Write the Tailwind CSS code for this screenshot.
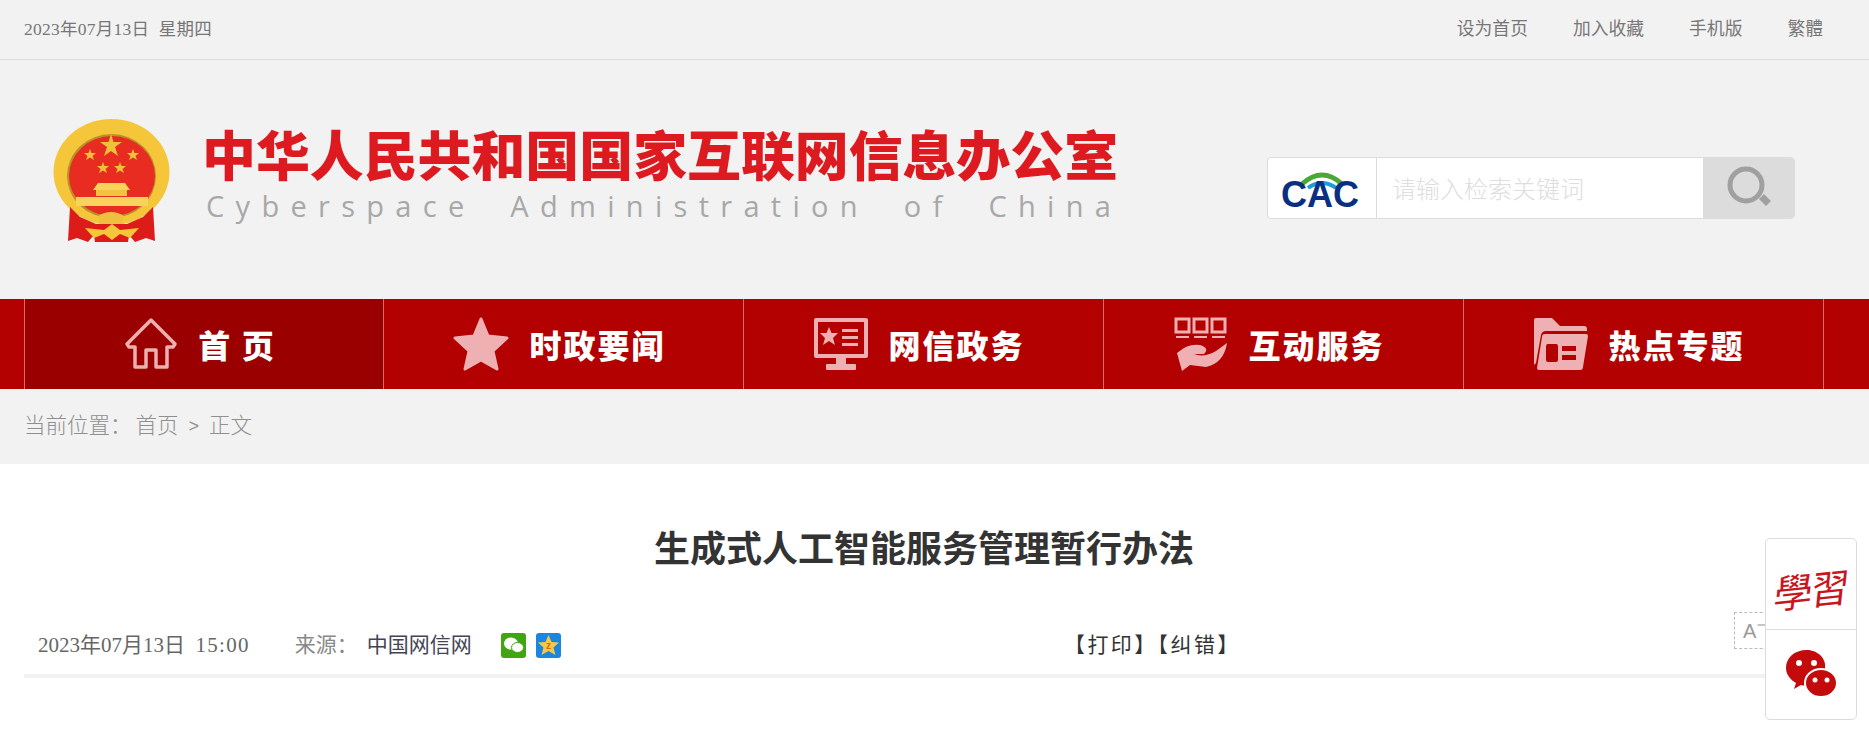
<!DOCTYPE html>
<html lang="zh">
<head>
<meta charset="utf-8">
<title>生成式人工智能服务管理暂行办法</title>
<script src="https://cdn.jsdelivr.net/npm/@tailwindcss/browser@4"></script>
</head>
<body class="relative h-[739px] w-[1869px] overflow-hidden bg-white font-['Liberation_Serif','Noto_Sans_CJK_SC',serif]">

<div class="flex h-[60px] items-center justify-between border-b border-[#dcdcdc] bg-[#f2f2f2] pl-6 pr-[46px] text-[17.5px] text-[#777]">
  <div class="whitespace-pre tracking-[0.26px]">2023年07月13日  星期四</div>
  <div class="flex gap-[45px] text-[17.8px]">
    <a>设为首页</a><a>加入收藏</a><a>手机版</a><a>繁體</a>
  </div>
</div>

<header class="flex h-[239px] items-center bg-[#f2f2f2] pl-[53px]">
  <svg class="mt-[2px] shrink-0" width="117" height="124" viewBox="23 19 117 124">
    <ellipse cx="81.5" cy="72" rx="58" ry="53" fill="#f6c63a"/>
    <ellipse cx="81.5" cy="76" rx="44.500" ry="42" fill="#b8912a"/>
    <ellipse cx="82" cy="76" rx="43" ry="40" fill="#e92c22"/>
    <path d="M81 34 L83.500 42 L92 42 L85 47 L88 56 L81 51 L74 56 L77 47 L70 42 L78.500 42 Z" fill="#f0c23a"/>
    <path d="M60 49 L61.500 53 L66 53 L62.500 56 L64 60 L60 57.500 L56 60 L57.500 56 L54 53 L58.500 53 Z" fill="#f0c23a"/>
    <path d="M103 49 L104.500 53 L109 53 L105.500 56 L107 60 L103 57.500 L99 60 L100.500 56 L97 53 L101.500 53 Z" fill="#f0c23a"/>
    <path d="M73 62 L74.500 66 L79 66 L75.500 69 L77 73 L73 70.500 L69 73 L70.500 69 L67 66 L71.500 66 Z" fill="#f0c23a"/>
    <path d="M90 62 L91.500 66 L96 66 L92.500 69 L94 73 L90 70.500 L86 73 L87.500 69 L84 66 L88.500 66 Z" fill="#f0c23a"/>
    <path d="M68 83 H95 L100 90 H63 Z" fill="#f8d35a"/>
    <rect x="66" y="90" width="31" height="6" fill="#f3c23e"/>
    <rect x="46" y="97" width="72" height="9" fill="#f8d35a"/>
    <path d="M40 107 L50 117 L66 124 L64 135 L58 142 L47 138 L38 141 Z" fill="#dd1c1a"/>
    <path d="M123 107 L113 117 L97 124 L99 135 L105 142 L116 138 L125 141 Z" fill="#dd1c1a"/>
    <path d="M62 124 H101 L98 142 H65 Z" fill="#dd1c1a"/>
    <path d="M68 116 Q81 108 94 116 L92 124 H70 Z" fill="#efc040"/>
    <path d="M55 128 L74 130 L82 124 L90 130 L109 128 L100 138 L90 134 L82 140 L74 134 L64 138 Z" fill="#f6c63a"/>
  </svg>
  <div class="mb-[15px] ml-[32px] w-[920px]">
    <div class="h-[66px] whitespace-nowrap font-['Noto_Sans_CJK_SC',sans-serif] text-[53.9px] leading-[66px] font-black text-[#dc1a1f]">中华人民共和国国家互联网信息办公室</div>
    <div class="ml-[4px] mt-[2px] whitespace-pre font-['Open_Sans',sans-serif] text-[29px] leading-[36px] tracking-[11.3px] text-[#a8a8a8] [word-spacing:16px]">Cyberspace Administration of China</div>
  </div>
  <div class="ml-[145px] mt-[16px] flex h-[62px] w-[528px] items-stretch overflow-hidden rounded-[4px] border border-[#dcdcdc] bg-white">
    <div class="relative w-[109px] border-r border-[#dcdcdc]">
      <svg class="absolute left-[32px] top-[14px]" width="44" height="14" viewBox="0 0 44 14">
        <path d="M2 12 Q22 -6 42 12" fill="none" stroke="#4ba838" stroke-width="5"/>
      </svg>
      <svg class="absolute left-[39px] top-[23px]" width="30" height="8" viewBox="0 0 30 8">
        <path d="M1 7 Q15 -3 29 7" fill="none" stroke="#1b9ddb" stroke-width="4"/>
      </svg>
      <span class="absolute left-[13px] top-[17px] font-['Liberation_Sans',sans-serif] text-[36px] leading-[40px] font-bold text-[#0b2f80]">CAC</span>
    </div>
    <div class="flex flex-1 items-center pl-[15px] font-['Noto_Sans_CJK_SC',sans-serif] text-[24px] font-light text-[#dedede]">请输入检索关键词</div>
    <div class="flex w-[91px] items-center justify-center bg-[#dcdcdc]">
      <svg width="46" height="46" viewBox="0 0 46 46">
        <ellipse cx="20" cy="20" rx="16" ry="16" fill="none" stroke="#a0a0a0" stroke-width="5"/>
        <path d="M33 34 L38 29 L45 36 L40 41 Z" fill="#a0a0a0"/>
      </svg>
    </div>
  </div>
</header>

<nav class="flex h-[90px] bg-[#b30000] pl-6 font-['Noto_Sans_CJK_SC',sans-serif] text-[32px] font-black text-white">
  <a class="flex w-[360px] items-center justify-center gap-5 border-x border-[#d96a6a] bg-[#9a0000] pr-2 tracking-[2px]">
    <svg width="54" height="54" viewBox="0 0 54 54" fill="none" stroke="#edb0b0" stroke-width="3.500" stroke-linejoin="round"><path d="M27 3 L3 27 L5 30 H11 V50 H22 V33 H32 V50 H43 V30 H49 L51 27 Z"/></svg>
    <span class="whitespace-pre">首 页</span>
  </a>
  <a class="flex w-[360px] items-center justify-center gap-5 border-r border-[#d96a6a] pr-2 tracking-[2px]">
    <svg width="56" height="56" viewBox="0 0 56 56" fill="#eeb0b2" stroke="#eeb0b2" stroke-width="3" stroke-linejoin="round"><path d="M28 3 L35 20 L54 22 L40 35 L44 53 L28 44 L12 53 L16 35 L2 22 L21 20 Z"/></svg>
    <span>时政要闻</span>
  </a>
  <a class="flex w-[360px] items-center justify-center gap-5 border-r border-[#d96a6a] pr-2 tracking-[2px]">
    <svg width="54" height="54" viewBox="0 0 54 54" fill="#eeb0b2">
      <path fill-rule="evenodd" d="M2 1 H52 Q54 1 54 3 V39 Q54 41 52 41 H2 Q0 41 0 39 V3 Q0 1 2 1 Z M4 5 V37 H50 V5 Z"/>
      <path d="M15 10 L17.500 16 L24 16 L19 21 L21 28 L15 24 L9 28 L11 21 L6 16 L12.500 16 Z"/>
      <rect x="28" y="12" width="16" height="3"/><rect x="28" y="19" width="16" height="3"/><rect x="28" y="26" width="16" height="3"/>
      <rect x="22" y="41" width="10" height="6"/><rect x="12" y="47" width="30" height="6" rx="1"/>
    </svg>
    <span>网信政务</span>
  </a>
  <a class="flex w-[360px] items-center justify-center gap-5 border-r border-[#d96a6a] pr-2 tracking-[2px]">
    <svg width="54" height="54" viewBox="0 0 54 54" fill="#eeb0b2">
      <g fill="none" stroke="#eeb0b2" stroke-width="3"><rect x="2" y="2" width="13" height="13"/><rect x="20" y="2" width="13" height="13"/><rect x="38" y="2" width="13" height="13"/></g>
      <path d="M2 19 H15 V21 H2 Z M20 19 H33 V21 H20 Z M38 19 H51 V21 H38 Z"/>
      <path d="M3 36 Q14 26 26 28 Q36 31 30 37 H20 Q30 41 42 34 L53 26 Q50 46 32 50 L16 48 L8 54 Z"/>
    </svg>
    <span>互动服务</span>
  </a>
  <a class="flex w-[360px] items-center justify-center gap-5 border-r border-[#d96a6a] pr-2 tracking-[2px]">
    <svg width="54" height="54" viewBox="0 0 54 54" fill="#eeb0b2">
      <path d="M0 3 Q0 1 2 1 H18 L26 9 H50 Q53 9 53 12 V14 H12 Q8 14 7 18 L2 46 L0 48 Z"/>
      <path fill-rule="evenodd" d="M11 17 H52 Q54 17 54 19 L49 50 Q49 53 46 53 H5 Q3 53 3 51 L8 20 Q8 17 11 17 Z M14 27 Q12 27 12 29 V43 Q12 45 14 45 H22 Q24 45 24 43 V29 Q24 27 22 27 Z M28 29 V34 H42 V29 Z M28 38 V43 H42 V38 Z"/>
    </svg>
    <span>热点专题</span>
  </a>
</nav>

<div class="flex h-[75px] items-center whitespace-pre bg-[#f2f2f2] pl-6 font-['Liberation_Sans','Noto_Sans_CJK_SC',sans-serif] text-[21.5px] font-light text-[#8f8f8f]">当前位置：<span class="ml-[4px]">首页</span><span class="mx-[10px] text-[18px]">&gt;</span><span>正文</span></div>

<main class="ml-6 w-[1821px]">
  <h1 class="mt-[58px] w-[1800px] text-center font-['Noto_Sans_CJK_SC',sans-serif] text-[36px] leading-[48px] font-bold text-[#333]">生成式人工智能服务管理暂行办法</h1>
  <div class="relative mt-[58px] flex h-[50px] items-center border-b-4 border-[#f2f2f2] pb-[11px] pl-[14px] text-[21px]">
    <span class="whitespace-pre text-[#666]">2023年07月13日  <span class="tracking-[1.3px]">15:00</span></span>
    <span class="ml-[45px] text-[#888]">来源：</span>
    <span class="ml-[9px] text-[#445]">中国网信网</span>
    <svg class="ml-[29px]" width="25" height="25" viewBox="0 0 25 25">
      <rect width="25" height="25" rx="3" fill="#3fa511"/>
      <ellipse cx="10" cy="10.500" rx="7" ry="6" fill="#fff"/>
      <ellipse cx="16.500" cy="14.500" rx="6" ry="5" fill="#fff" stroke="#3fa511"/>
    </svg>
    <svg class="ml-[10px]" width="25" height="25" viewBox="0 0 25 25">
      <rect width="25" height="25" rx="3" fill="#1a86e0"/>
      <path d="M12.500 2 L15.500 9 L23 9.500 L17.500 14.500 L19.500 22 L12.500 18 L5.500 22 L7.500 14.500 L2 9.500 L9.500 9 Z" fill="#f6c945"/>
      <text x="12.500" y="16" text-anchor="middle" font-size="10" font-weight="700" fill="#d8641e" font-family="Liberation Sans">z</text>
    </svg>
    <span class="absolute left-[1040px] top-[-1px] leading-[36px] tracking-[2.4px] text-[#333]">【打印】【纠错】</span>
    <span class="absolute left-[1710px] top-[-16px] flex h-[37px] w-[44px] items-center border border-dashed border-[#bbb] pl-[8px] font-['Liberation_Sans',sans-serif] text-[20px] font-light text-[#999]">A<span class="mb-[10px] ml-[1px] text-[13px]">一</span></span>
  </div>
</main>

<aside class="absolute left-[1765px] top-[538px] flex h-[182px] w-[92px] flex-col rounded-[5px] border border-[#dcdcdc] bg-white">
  <div class="flex h-[91px] items-center justify-center border-b border-[#dcdcdc] pt-2">
    <span class="-rotate-6 -skew-x-12 whitespace-nowrap font-['Noto_Sans_CJK_TC',sans-serif] text-[39px] leading-none tracking-[-2px] text-[#c9151e]">學習</span>
  </div>
  <div class="flex flex-1 items-center justify-center pb-[2px]">
    <svg width="52" height="50" viewBox="0 0 52 50">
      <path d="M22 1 C9 1 1 9 1 19 C1 26 6 31 11 34 L9 40 L16 36 C24 38 30 36 30 36 L40 20 C42 10 33 1 22 1 Z" fill="#c40a0a"/>
      <ellipse cx="36" cy="34" rx="16" ry="14" fill="#c40a0a" stroke="#fff" stroke-width="2"/>
      <circle cx="14" cy="14" r="3" fill="#fff"/><circle cx="29" cy="14" r="3" fill="#fff"/>
      <circle cx="30" cy="31" r="2.500" fill="#fff"/><circle cx="42" cy="31" r="2.500" fill="#fff"/>
    </svg>
  </div>
</aside>
</body>
</html>
